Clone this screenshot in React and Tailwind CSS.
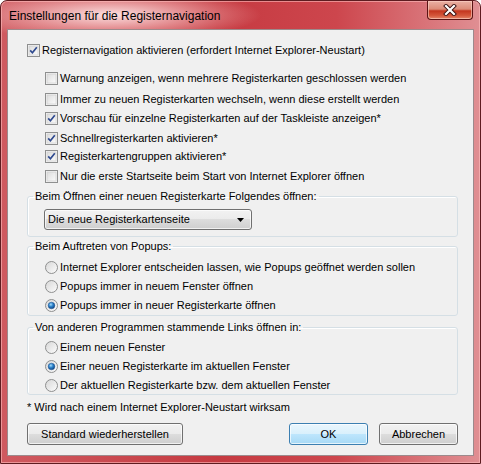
import React from 'react'

const font = { fontFamily: '"Liberation Sans", Arial, sans-serif' }

function CheckBox({ checked }) {
  return (
    <svg width="13" height="13" viewBox="0 0 13 13" className="shrink-0">
      <defs>
        <linearGradient id="cbg" x1="0" y1="0" x2="1" y2="1">
          <stop offset="0" stopColor="#dcdcdc" />
          <stop offset="1" stopColor="#fbfbfb" />
        </linearGradient>
      </defs>
      <rect x="0.5" y="0.5" width="12" height="12" fill="#f4f4f4" stroke="#8e8f8f" />
      <rect x="2" y="2" width="9" height="9" fill="url(#cbg)" stroke="#c9c9c9" strokeWidth="0.6" />
      {checked && (
        <path d="M3.2 6.4 L5.4 8.8 L9.8 3.2" fill="none" stroke="#2f4a8f" strokeWidth="1.7" />
      )}
    </svg>
  )
}

function Radio({ checked }) {
  return (
    <svg width="13" height="13" viewBox="0 0 13 13" className="shrink-0">
      <defs>
        <linearGradient id="rbg" x1="0" y1="0" x2="1" y2="1">
          <stop offset="0" stopColor="#d6d6d6" />
          <stop offset="1" stopColor="#fdfdfd" />
        </linearGradient>
        <radialGradient id="rdot" cx="0.4" cy="0.35" r="0.7">
          <stop offset="0" stopColor="#a9dcfa" />
          <stop offset="0.45" stopColor="#2d84cc" />
          <stop offset="1" stopColor="#0c3c78" />
        </radialGradient>
      </defs>
      <circle cx="6.5" cy="6.5" r="6" fill="url(#rbg)" stroke="#8e8f8f" />
      {checked && <circle cx="6.5" cy="6.5" r="3.3" fill="url(#rdot)" stroke="#1b4f8f" strokeWidth="0.5" />}
    </svg>
  )
}

function CheckRow({ checked, label, className = '' }) {
  return (
    <div className={`flex items-center h-[16px] ${className}`}>
      <CheckBox checked={checked} />
      <span className="ml-[2px]">{label}</span>
    </div>
  )
}

function RadioRow({ checked, label, className = '' }) {
  return (
    <div className={`flex items-center h-[16px] ${className}`}>
      <Radio checked={checked} />
      <span className="ml-[2px]">{label}</span>
    </div>
  )
}

function Group({ title, className = '', children }) {
  return (
    <fieldset className={`border border-[#d5dfe5] rounded-[3px] shadow-[inset_1px_1px_0_#ffffff] ${className}`}>
      <legend className="ml-[5px] px-[2px] leading-[14px]">{title}</legend>
      {children}
    </fieldset>
  )
}

const btn =
  'h-[22px] border rounded-[3px] flex items-center justify-center shadow-[inset_0_0_0_1px_rgba(255,255,255,0.7)]'

export default function App() {
  const subs = [
    { label: 'Warnung anzeigen, wenn mehrere Registerkarten geschlossen werden', checked: false, mt: 'mt-[12px]' },
    { label: 'Immer zu neuen Registerkarten wechseln, wenn diese erstellt werden', checked: false, mt: 'mt-[5px]' },
    { label: 'Vorschau für einzelne Registerkarten auf der Taskleiste anzeigen*', checked: true, mt: 'mt-[3px]' },
    { label: 'Schnellregisterkarten aktivieren*', checked: true, mt: 'mt-[4px]' },
    { label: 'Registerkartengruppen aktivieren*', checked: true, mt: 'mt-[2px]' },
    { label: 'Nur die erste Startseite beim Start von Internet Explorer öffnen', checked: false, mt: 'mt-[4px]' },
  ]

  return (
    <div
      style={font}
      className="w-[481px] h-[464px] flex flex-col border border-[#5e1c20] rounded-t-[7px] overflow-hidden text-[11px] text-black bg-[radial-gradient(ellipse_150px_26px_at_110px_14px,rgba(255,232,232,0.95),rgba(255,215,215,0.45)_55%,transparent),linear-gradient(90deg,#cf5a60,#c63a41_45%,#cd464d_70%,#e08f93)] shadow-[inset_0_0_0_1px_rgba(255,190,190,0.6)]"
    >
      {/* title bar */}
      <div className="h-[28px] flex items-start shrink-0">
        <span className="pl-[8px] pt-[8px] text-[12px] leading-[14px]">
          Einstellungen für die Registernavigation
        </span>
        <div className="ml-auto mr-[7px] w-[46px] h-[19px] border border-t-0 border-[#5a1414] rounded-b-[4px] flex items-center justify-center bg-[linear-gradient(#eab0a4,#dc8c78_45%,#c4361f_55%,#d4563a_80%,#e3866a)] shadow-[inset_0_0_0_1px_rgba(255,210,200,0.6)]">
          <svg width="14" height="12" viewBox="0 0 14 12">
            <path d="M3 2 L11 10 M11 2 L3 10" stroke="#3a1010" strokeWidth="4" strokeLinecap="square" />
            <path d="M3 2 L11 10 M11 2 L3 10" stroke="#ffffff" strokeWidth="2.2" strokeLinecap="square" />
          </svg>
        </div>
      </div>

      {/* content panel */}
      <div className="flex-1 mx-[6px] mb-[7px] bg-[#f0f0f0] border border-[#9c8a8c] pl-[19px] pr-[15px] pt-[12px] flex flex-col">
        <CheckRow checked label="Registernavigation aktivieren (erfordert Internet Explorer-Neustart)" />
        <div className="pl-[18px] flex flex-col">
          {subs.map((s) => (
            <CheckRow key={s.label} checked={s.checked} label={s.label} className={s.mt} />
          ))}
        </div>

        <Group title="Beim Öffnen einer neuen Registerkarte Folgendes öffnen:" className="mt-[5px] pb-[6px]">
          <div className="mt-[6px] ml-[16px] w-[208px] h-[21px] border border-[#707070] rounded-[3px] flex items-center pl-[3px] pr-[4px] bg-[linear-gradient(#f2f2f2,#ebebeb_50%,#dddddd_50%,#cfcfcf)] shadow-[inset_0_0_0_1px_rgba(255,255,255,0.7)]">
            <span>Die neue Registerkartenseite</span>
            <svg width="7" height="4" viewBox="0 0 7 4" className="ml-auto mr-[3px]">
              <path d="M0 0 H7 L3.5 4 Z" fill="#000" />
            </svg>
          </div>
        </Group>

        <Group title="Beim Auftreten von Popups:" className="mt-[2px] pb-[2px]">
          <div className="pl-[17px] flex flex-col">
            <RadioRow className="mt-[6px]" label="Internet Explorer entscheiden lassen, wie Popups geöffnet werden sollen" />
            <RadioRow className="mt-[3px]" label="Popups immer in neuem Fenster öffnen" />
            <RadioRow className="mt-[3px]" checked label="Popups immer in neuer Registerkarte öffnen" />
          </div>
        </Group>

        <Group title="Von anderen Programmen stammende Links öffnen in:" className="mt-[4px] pb-[1px]">
          <div className="pl-[17px] flex flex-col">
            <RadioRow className="mt-[5px]" label="Einem neuen Fenster" />
            <RadioRow className="mt-[3px]" checked label="Einer neuen Registerkarte im aktuellen Fenster" />
            <RadioRow className="mt-[3px]" label="Der aktuellen Registerkarte bzw. dem aktuellen Fenster" />
          </div>
        </Group>

        <div className="mt-[5px] leading-[14px]">* Wird nach einem Internet Explorer-Neustart wirksam</div>

        <div className="mt-[9px] flex">
          <button className={`${btn} w-[156px] border-[#707070] bg-[linear-gradient(#f2f2f2,#ebebeb_50%,#dddddd_50%,#cfcfcf)]`}>
            Standard wiederherstellen
          </button>
          <button className={`${btn} ml-auto w-[79px] border-[#3c7fb1] bg-[linear-gradient(#eaf6fd,#d9f0fc_50%,#bee6fd_50%,#a7d9f5)]`}>
            OK
          </button>
          <button className={`${btn} ml-[11px] w-[79px] border-[#707070] bg-[linear-gradient(#f2f2f2,#ebebeb_50%,#dddddd_50%,#cfcfcf)]`}>
            Abbrechen
          </button>
        </div>
      </div>
    </div>
  )
}
